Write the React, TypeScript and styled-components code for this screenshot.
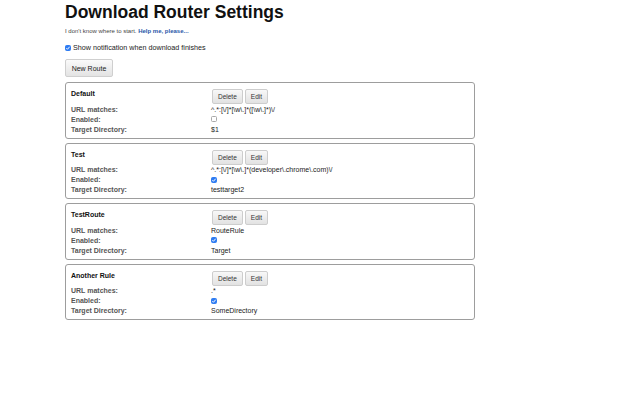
import React from 'react'
import styled, { createGlobalStyle } from 'styled-components'

const GlobalStyle = createGlobalStyle`
  html,
  body {
    margin: 0;
    padding: 0;
    background: #fff;
  }
  body {
    font-family: 'Liberation Sans', Arial, Helvetica, sans-serif;
    color: #222;
  }
`

interface Route {
  name: string
  url: string
  enabled: boolean
  target: string
}

const routes: Route[] = [
  { name: 'Default', url: '^.*:[\\/]*[\\w\\.]*([\\w\\.]*)\\/', enabled: false, target: '$1' },
  {
    name: 'Test',
    url: '^.*:[\\/]*[\\w\\.]*(developer\\.chrome\\.com)\\/',
    enabled: true,
    target: 'testtarget2',
  },
  { name: 'TestRoute', url: 'RouteRule', enabled: true, target: 'Target' },
  { name: 'Another Rule', url: '.*', enabled: true, target: 'SomeDirectory' },
]

export default function App() {
  return (
    <>
      <GlobalStyle />
      <Page>
        <Title>Download Router Settings</Title>
        <Intro>
          I don&apos;t know where to start. <HelpLink href="#">Help me, please...</HelpLink>
        </Intro>
        <NotifyRow>
          <CheckBox checked />
          <span>Show notification when download finishes</span>
        </NotifyRow>
        <NewRouteButton>New Route</NewRouteButton>
        <RouteList>
          {routes.map((route) => (
            <RouteCard key={route.name}>
              <RouteName>{route.name}</RouteName>
              <Actions>
                <SmallButton>Delete</SmallButton>
                <SmallButton>Edit</SmallButton>
              </Actions>
              <Label>URL matches:</Label>
              <Value>{route.url}</Value>
              <Label>Enabled:</Label>
              <Value>
                <CheckBox checked={route.enabled} />
              </Value>
              <Label>Target Directory:</Label>
              <Value>{route.target}</Value>
            </RouteCard>
          ))}
        </RouteList>
      </Page>
    </>
  )
}

function CheckBox({ checked }: { checked?: boolean }) {
  return (
    <Box $checked={!!checked}>
      {checked && (
        <svg viewBox="0 0 8 8" width="6" height="6">
          <path d="M1.8 4.2 L3.3 5.7 L6.2 2.3" stroke="#fff" strokeWidth="1.3" fill="none" />
        </svg>
      )}
    </Box>
  )
}

const Page = styled.div`
  display: flex;
  flex-direction: column;
  align-items: flex-start;
  padding: 2px 0 0 65px;
`

const Title = styled.h1`
  margin: 0;
  font-size: 17.5px;
  line-height: 20px;
  font-weight: 700;
  color: #111;
`

const Intro = styled.p`
  margin: 5px 0 0;
  font-size: 6px;
  line-height: 8px;
  color: #444;
`

const HelpLink = styled.a`
  color: #2a57a8;
  font-weight: 700;
  text-decoration: none;
`

const NotifyRow = styled.label`
  display: flex;
  align-items: center;
  gap: 2px;
  margin-top: 8px;
  font-size: 7.2px;
  line-height: 9px;
  color: #222;
`

const Box = styled.span<{ $checked: boolean }>`
  display: inline-flex;
  align-items: center;
  justify-content: center;
  box-sizing: border-box;
  width: 6px;
  height: 6px;
  border-radius: 1.5px;
  border: 1px solid ${(p) => (p.$checked ? '#2f7cf2' : '#a9a9a9')};
  background: ${(p) => (p.$checked ? '#2f7cf2' : '#fff')};

  svg {
    flex: none;
  }
`

const NewRouteButton = styled.button`
  margin-top: 7px;
  width: 48px;
  height: 18px;
  padding: 0;
  font-family: inherit;
  font-size: 7px;
  color: #222;
  background: linear-gradient(#fafafa, #e3e3e3);
  border: 1px solid #cfcfcf;
  border-radius: 2px;
`

const RouteList = styled.div`
  display: flex;
  flex-direction: column;
  gap: 4px;
  width: 410px;
  margin-top: 5px;
`

const RouteCard = styled.section`
  display: grid;
  grid-template-columns: 140px 1fr;
  grid-template-rows: 15px repeat(3, 10px);
  box-sizing: border-box;
  height: 56.5px;
  padding: 6px 6px 2px 5px;
  border: 1px solid #9d9d9d;
  border-radius: 3px;
  font-size: 7px;
`

const RouteName = styled.h2`
  margin: 0;
  padding-top: 1px;
  font-size: 7px;
  line-height: 8px;
  font-weight: 700;
  color: #111;
`

const Actions = styled.div`
  display: flex;
  gap: 2px;
  margin-left: 1px;
`

const SmallButton = styled.button`
  height: 15px;
  padding: 0 5px;
  font-family: inherit;
  font-size: 6.5px;
  color: #333;
  background: linear-gradient(#f8f8f8, #e2e2e2);
  border: 1px solid #cdcdcd;
  border-radius: 2px;
`

const Label = styled.div`
  display: flex;
  align-items: center;
  font-weight: 700;
  color: #555;
`

const Value = styled.div`
  display: flex;
  align-items: center;
  color: #222;
  white-space: nowrap;
`
